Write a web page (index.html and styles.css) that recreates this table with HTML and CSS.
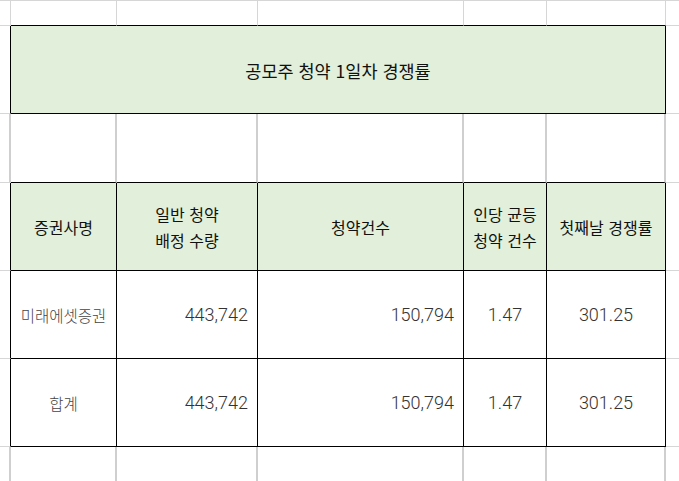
FILE: index.html
```html
<!DOCTYPE html>
<html lang="ko">
<head>
<meta charset="utf-8">
<link rel="stylesheet" href="styles.css">
</head>
<body>
<div class="sheet">
  <!-- row 0 -->
  <div class="cell side-l"></div>
  <div class="cell above"></div>
  <div class="cell above"></div>
  <div class="cell above"></div>
  <div class="cell above"></div>
  <div class="cell above"></div>
  <div class="cell side-r"></div>

  <!-- row 1: title -->
  <div class="cell side-l edge"></div>
  <div class="cell tb green title">공모주 청약 1일차 경쟁률</div>
  <div class="cell side-r"></div>

  <!-- row 2: empty -->
  <div class="cell side-l thick"></div>
  <div class="cell thick over-table"></div>
  <div class="cell thick over-table"></div>
  <div class="cell thick over-table"></div>
  <div class="cell thick over-table"></div>
  <div class="cell thick over-table"></div>
  <div class="cell side-r"></div>

  <!-- row 3: headers -->
  <div class="cell side-l edge"></div>
  <div class="cell tb green head">증권사명</div>
  <div class="cell tb green head">일반 청약<br>배정 수량</div>
  <div class="cell tb green head">청약건수</div>
  <div class="cell tb green head">인당 균등<br>청약 건수</div>
  <div class="cell tb green head">첫째날 경쟁률</div>
  <div class="cell side-r"></div>

  <!-- row 4 -->
  <div class="cell side-l edge"></div>
  <div class="cell tb label">미래에셋증권</div>
  <div class="cell tb num right">443,742</div>
  <div class="cell tb num right">150,794</div>
  <div class="cell tb num">1.47</div>
  <div class="cell tb num">301.25</div>
  <div class="cell side-r"></div>

  <!-- row 5 -->
  <div class="cell side-l edge"></div>
  <div class="cell tb label">합계</div>
  <div class="cell tb num right">443,742</div>
  <div class="cell tb num right">150,794</div>
  <div class="cell tb num">1.47</div>
  <div class="cell tb num">301.25</div>
  <div class="cell side-r"></div>

  <!-- row 6 -->
  <div class="cell side-l thick last"></div>
  <div class="cell thick last"></div>
  <div class="cell thick last"></div>
  <div class="cell thick last"></div>
  <div class="cell thick last"></div>
  <div class="cell thick last"></div>
  <div class="cell side-r last"></div>
</div>
</body>
</html>
```

FILE: styles.css
```css
html, body {
  margin: 0;
  padding: 0;
  background: #ffffff;
}

.sheet {
  width: 679px;
  height: 481px;
  box-sizing: border-box;
  border-top: 1px solid #d6d6d6;
  display: grid;
  grid-template-columns: 11px 106px 141px 206px 83px 119px 1fr;
  grid-template-rows: 25px 88px 69px 88px 88px 88px 1fr;
  overflow: hidden;
  font-family: "Noto Sans CJK KR", "Noto Sans", sans-serif;
}

.cell {
  box-sizing: border-box;
  border-right: 1px solid #d6d6d6;
  border-bottom: 1px solid #d6d6d6;
  display: flex;
  align-items: center;
  justify-content: center;
  text-align: center;
  min-width: 0;
}

.side-r {
  border-right: none;
}

.above {
  border-bottom: 1px solid #000;
}

.edge {
  border-right: 1px solid #000;
}

.thick {
  border-right: 2px solid #cfcfcf;
}

.over-table {
  border-bottom: 1px solid #000;
}

.last {
  border-bottom: none;
}

.tb {
  border-right: 1px solid #000;
  border-bottom: 1px solid #000;
}

.green {
  background: #e2efda;
}

.title {
  grid-column: 2 / 7;
  font-size: 17.5px;
  color: #111;
  padding-top: 1px;
}

.head {
  font-size: 16px;
  line-height: 26px;
  color: #111;
}

.label {
  font-size: 15.5px;
  font-weight: 300;
  color: #444;
}

.num {
  font-family: Roboto, "Noto Sans", sans-serif;
  font-weight: 300;
  font-size: 18px;
  color: #333;
}

.right {
  justify-content: flex-end;
  padding-right: 9px;
}
```
